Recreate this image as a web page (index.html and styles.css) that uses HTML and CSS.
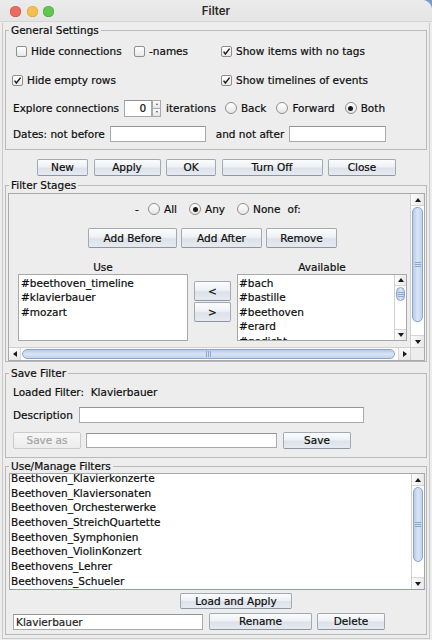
FILE: index.html
```html
<!DOCTYPE html>
<html>
<head>
<meta charset="utf-8">
<title>Filter</title>
<link rel="stylesheet" href="styles.css">
</head>
<body>
<div class="window">
  <div class="titlebar">
    <div class="lights"><span class="light red"></span><span class="light yellow"></span><span class="light green"></span></div>
    <div class="title">Filter</div>
    <div></div>
  </div>
  <div class="frame">
    <fieldset class="group gs">
      <legend>General Settings</legend>
      <div class="gs-body">
        <div class="row r1">
          <label class="cb w1"><span class="box"></span>Hide connections</label>
          <label class="cb w2"><span class="box"></span>-names</label>
          <label class="cb"><span class="box"><svg viewBox="0 0 11 11" width="11" height="11"><path d="M2.6 5.6 L4.4 8 L8.6 2.6" fill="none" stroke="#1c1c1c" stroke-width="1.4"/></svg></span>Show items with no tags</label>
        </div>
        <div class="row r2">
          <label class="cb w3"><span class="box"><svg viewBox="0 0 11 11" width="11" height="11"><path d="M2.6 5.6 L4.4 8 L8.6 2.6" fill="none" stroke="#1c1c1c" stroke-width="1.4"/></svg></span>Hide empty rows</label>
          <label class="cb"><span class="box"><svg viewBox="0 0 11 11" width="11" height="11"><path d="M2.6 5.6 L4.4 8 L8.6 2.6" fill="none" stroke="#1c1c1c" stroke-width="1.4"/></svg></span>Show timelines of events</label>
        </div>
        <div class="row r3">
          <span>Explore connections</span>
          <span class="spinner"><span class="spin-field">0</span><span class="spin-arrows"><span class="sa sa-up"></span><span class="sa sa-down"></span></span></span>
          <span class="iter">iterations</span>
          <label class="rb rb-first"><span class="radio"></span>Back</label>
          <label class="rb"><span class="radio"></span>Forward</label>
          <label class="rb"><span class="radio on"></span>Both</label>
        </div>
        <div class="row r4">
          <span>Dates: not before</span>
          <span class="field f-before"></span>
          <span class="after-lbl">and not after</span>
          <span class="field f-after"></span>
        </div>
      </div>
    </fieldset>

    <div class="main-btns">
      <button class="btn b-new">New</button>
      <button class="btn b-apply">Apply</button>
      <button class="btn b-ok">OK</button>
      <button class="btn b-off">Turn Off</button>
      <button class="btn b-close">Close</button>
    </div>

    <fieldset class="group fs">
      <legend>Filter Stages</legend>
      <div class="spane">
        <div class="vp">
          <div class="mode-row">
            <span class="dash">-</span>
            <label class="rb rb-m1"><span class="radio"></span>All</label>
            <label class="rb rb-m"><span class="radio on"></span>Any</label>
            <label class="rb rb-m"><span class="radio"></span>None</label>
            <span class="of">of:</span>
          </div>
          <div class="stage-btns">
            <button class="btn b-before">Add Before</button>
            <button class="btn b-after">Add After</button>
            <button class="btn b-remove">Remove</button>
          </div>
          <div class="lists">
            <div class="col col-use">
              <div class="cap">Use</div>
              <div class="list use-list">
                <div class="item">#beethoven_timeline</div>
                <div class="item">#klavierbauer</div>
                <div class="item">#mozart</div>
              </div>
            </div>
            <div class="move-btns">
              <button class="btn b-move">&lt;</button>
              <button class="btn b-move">&gt;</button>
            </div>
            <div class="col col-avail">
              <div class="cap">Available</div>
              <div class="list avail-list">
                <div class="avail-items">
                  <div class="item">#bach</div>
                  <div class="item">#bastille</div>
                  <div class="item">#beethoven</div>
                  <div class="item">#erard</div>
                  <div class="item">#gedicht</div>
                </div>
                <div class="vscroll vs-avail">
                  <div class="sarrow up"></div>
                  <div class="strack"><div class="thumb"></div></div>
                  <div class="sarrow down"></div>
                </div>
              </div>
            </div>
          </div>
        </div>
        <div class="vscroll vs-stage">
          <div class="sarrow up"></div>
          <div class="strack"><div class="thumb"></div></div>
          <div class="sarrow down"></div>
        </div>
        <div class="hscroll">
          <div class="sarrow left"></div>
          <div class="strack"><div class="thumb"></div></div>
          <div class="sarrow right"></div>
        </div>
        <div class="corner"></div>
      </div>
    </fieldset>

    <fieldset class="group sv">
      <legend>Save Filter</legend>
      <div class="sv-body">
        <div class="sv-row1">Loaded Filter:  Klavierbauer</div>
        <div class="sv-row2">
          <span>Description</span>
          <span class="field f-desc"></span>
        </div>
        <div class="sv-row3">
          <button class="btn disabled b-saveas">Save as</button>
          <span class="field f-name"></span>
          <button class="btn b-save">Save</button>
        </div>
      </div>
    </fieldset>

    <fieldset class="group um">
      <legend>Use/Manage Filters</legend>
      <div class="um-body">
        <div class="mlist">
          <div class="mitems">
            <div class="mitems-inner">
              <div class="item">Beethoven_Klavierkonzerte</div>
              <div class="item">Beethoven_Klaviersonaten</div>
              <div class="item">Beethoven_Orchesterwerke</div>
              <div class="item">Beethoven_StreichQuartette</div>
              <div class="item">Beethoven_Symphonien</div>
              <div class="item">Beethoven_ViolinKonzert</div>
              <div class="item">Beethovens_Lehrer</div>
              <div class="item">Beethovens_Schueler</div>
            </div>
          </div>
          <div class="vscroll vs-manage">
            <div class="sarrow up"></div>
            <div class="strack"><div class="thumb"></div></div>
            <div class="sarrow down"></div>
          </div>
        </div>
        <div class="load-row">
          <button class="btn b-load">Load and Apply</button>
        </div>
        <div class="bottom-row">
          <span class="field f-current">Klavierbauer</span>
          <button class="btn b-rename">Rename</button>
          <button class="btn b-delete">Delete</button>
        </div>
      </div>
    </fieldset>
  </div>
</div>
</body>
</html>
```

FILE: styles.css
```css
* { box-sizing: border-box; }
html, body { margin: 0; padding: 0; }
body {
  width: 432px;
  height: 640px;
  overflow: hidden;
  background: #7c9cc8;
  font-family: "DejaVu Sans", "Liberation Sans", sans-serif;
  font-size: 10.5px;
  color: #0d0d0d;
  -webkit-text-stroke: 0.2px currentColor;
}
.window {
  width: 432px;
  height: 640px;
  background: #ededed;
  border-top-right-radius: 10px;
  overflow: hidden;
}

/* title bar */
.titlebar {
  height: 22px;
  border-bottom: 1px solid #d4d4d4;
  background: linear-gradient(#ebebeb, #e5e5e5);
  display: grid;
  grid-template-columns: 1fr auto 1fr;
  align-items: center;
}
.lights { display: flex; gap: 5.5px; padding-left: 10px; padding-top: 1px; }
.light { width: 11px; height: 11px; border-radius: 50%; }
.red { background: #ed6a5e; box-shadow: inset 0 0 0 0.5px #d05247; }
.yellow { background: #f5bf4f; box-shadow: inset 0 0 0 0.5px #d6a13a; }
.green { background: #61c554; box-shadow: inset 0 0 0 0.5px #4aa83f; }
.title {
  font-family: Inter, "DejaVu Sans", sans-serif;
  font-weight: 600;
  font-size: 11.5px;
  color: #2a2a2a;
  -webkit-text-stroke: 0;
  padding-top: 1px;
}

/* outer frame */
.frame {
  margin: 0 2px;
  height: 616px;
  border: 1px solid #cacaca;
  border-top: none;
  padding: 0 2px;
}

/* group boxes */
.group {
  margin: 0;
  padding: 0;
  min-width: 0;
  border: 1px solid #b9b9b9;
}
.group > legend {
  margin-left: 3px;
  padding: 0 2px;
  height: 14px;
  line-height: 14px;
  font-size: 10.5px;
}
.gs { margin-top: 1px; }
.fs { margin-top: 2px; }
.sv { margin-top: 4px; }
.um { margin-top: 1px; }

/* general settings */
.gs-body { padding: 4px 7px 5px 7px; }
.row { display: flex; align-items: center; height: 20px; white-space: nowrap; }
.r2 { margin-top: 9px; margin-left: -1px; }
.r3 { margin-top: 8px; }
.r4 { margin-top: 6px; }
.r1 { padding-left: 3px; }

.cb { display: flex; align-items: center; flex: none; }
.w1 { width: 118px; }
.w2 { width: 87px; }
.w3 { width: 209px; }
.box {
  width: 11px;
  height: 11px;
  margin-right: 4px;
  border: 1px solid #8e8e8e;
  border-radius: 2px;
  background: linear-gradient(#ffffff, #e9e9e9);
  display: flex;
  align-items: center;
  justify-content: center;
  flex: none;
  overflow: hidden;
}
.box svg { display: block; flex: none; }

.rb { display: flex; align-items: center; flex: none; }
.radio {
  width: 12px;
  height: 12px;
  margin-right: 4px;
  border: 1px solid #8e8e8e;
  border-radius: 50%;
  background: linear-gradient(#ffffff, #e6e6e6);
  display: flex;
  align-items: center;
  justify-content: center;
  flex: none;
}
.radio.on::after {
  content: "";
  width: 5px;
  height: 5px;
  border-radius: 50%;
  background: #1a1a1a;
}
.rb-first { margin-left: 9px; }
.r3 .rb + .rb { margin-left: 10px; }

.spinner { display: flex; margin-left: 5px; height: 17px; flex: none; }
.spin-field {
  width: 28px;
  height: 17px;
  background: #fff;
  border: 1px solid #a8a8a8;
  border-top-color: #919191;
  text-align: right;
  padding-right: 5px;
  line-height: 15px;
}
.spin-arrows { display: flex; flex-direction: column; width: 9px; }
.sa {
  flex: 1;
  border: 1px solid #a8a8a8;
  background: linear-gradient(#fdfdfd, #e4e4e4);
  display: flex;
  align-items: center;
  justify-content: center;
}
.sa + .sa { border-top: none; }
.sa-up::after { content: ""; border-left: 1.5px solid transparent; border-right: 1.5px solid transparent; border-bottom: 2px solid #555; }
.sa-down::after { content: ""; border-left: 1.5px solid transparent; border-right: 1.5px solid transparent; border-top: 2px solid #555; }
.iter { margin-left: 5px; }

.field {
  display: block;
  flex: none;
  height: 16px;
  background: #fff;
  border: 1px solid #aaaaaa;
  border-top-color: #949494;
}
.f-before { width: 96px; margin-left: 5px; }
.after-lbl { margin-left: 10px; }
.f-after { width: 97px; margin-left: 4.5px; }

/* buttons */
.btn {
  font-family: inherit;
  font-size: 10.5px;
  color: #0d0d0d;
  -webkit-text-stroke: 0.2px currentColor;
  height: 17px;
  padding: 0;
  margin: 0;
  border: 1px solid #a2a9b4;
  border-bottom-color: #8e96a3;
  border-radius: 2px;
  background: linear-gradient(#fbfcfd, #eef1f5 45%, #dde2ea 55%, #e6eaf0);
  text-align: center;
  line-height: 15px;
  flex: none;
}
.btn.disabled {
  color: #a3a3a3;
  border-color: #cbcbcb;
  background: linear-gradient(#f7f7f7, #ececec);
}
.main-btns {
  display: flex;
  justify-content: center;
  gap: 5.5px;
  margin-top: 9px;
  height: 17px;
  padding-left: 1px;
}
.b-new { width: 51px; }
.b-apply { width: 67px; }
.b-ok { width: 50px; }
.b-off { width: 101px; }
.b-close { width: 68px; }

/* filter stages scroll pane */
.spane {
  height: 168px;
  margin: 1px 1px 0 2px;
  border: 1px solid #a9a9a9;
  display: grid;
  grid-template-columns: 1fr 14px;
  grid-template-rows: 1fr 13px;
}
.vp { overflow: hidden; }
.mode-row {
  display: flex;
  align-items: center;
  height: 20px;
  margin-top: 5px;
  padding-left: 126px;
  white-space: nowrap;
}
.dash { width: 5px; }
.rb-m1 { margin-left: 8px; }
.rb-m { margin-left: 12px; }
.of { margin-left: 7px; }
.stage-btns {
  display: flex;
  gap: 4px;
  margin-top: 9px;
  padding-left: 79px;
}
.stage-btns .btn { height: 20px; line-height: 18px; }
.b-before { width: 89px; }
.b-after { width: 81px; }
.b-remove { width: 71px; }

.lists { display: flex; margin-top: 12px; padding-left: 9px; }
.col { width: 170px; flex: none; }
.cap { height: 14px; line-height: 14px; text-align: center; }
.list {
  height: 67px;
  background: #fff;
  border: 1px solid #a8a8a8;
  overflow: hidden;
}
.use-list { padding: 1px 2px; }
.item { line-height: 14.4px; height: 14.4px; white-space: nowrap; }
.move-btns {
  display: flex;
  flex-direction: column;
  gap: 1px;
  padding-top: 21px;
  margin-left: 6px;
  margin-right: 6px;
}
.b-move { width: 37px; height: 20px; line-height: 18px; }
.avail-list { display: grid; grid-template-columns: 1fr 12px; }
.avail-items { padding: 1px 1px; overflow: hidden; }

/* scrollbars */
.vscroll {
  display: flex;
  flex-direction: column;
  background: #f4f4f4;
  border-left: 1px solid #d0d0d0;
}
.hscroll {
  display: flex;
  background: #f4f4f4;
  border-top: 1px solid #d0d0d0;
}
.sarrow {
  flex: none;
  display: flex;
  align-items: center;
  justify-content: center;
  background: linear-gradient(90deg, #fcfcfc, #e8e8e8);
}
.vscroll .sarrow { height: 12px; }
.hscroll .sarrow { width: 12px; background: linear-gradient(#fcfcfc, #e8e8e8); }
.sarrow.up { border-bottom: 1px solid #d6d6d6; }
.sarrow.down { border-top: 1px solid #d6d6d6; }
.sarrow.left { border-right: 1px solid #d6d6d6; }
.sarrow.right { border-left: 1px solid #d6d6d6; }
.sarrow.up::after { content: ""; border-left: 3px solid transparent; border-right: 3px solid transparent; border-bottom: 4px solid #1a1a1a; }
.sarrow.down::after { content: ""; border-left: 3px solid transparent; border-right: 3px solid transparent; border-top: 4px solid #1a1a1a; }
.sarrow.left::after { content: ""; border-top: 3px solid transparent; border-bottom: 3px solid transparent; border-right: 4px solid #1a1a1a; }
.sarrow.right::after { content: ""; border-top: 3px solid transparent; border-bottom: 3px solid transparent; border-left: 4px solid #1a1a1a; }
.strack {
  flex: 1;
  display: flex;
  background: #ffffff;
  min-width: 0;
  min-height: 0;
}
.vscroll .strack { flex-direction: column; padding: 0 1px; }
.hscroll .strack { padding: 1px 0; }
.thumb {
  flex: none;
  border: 1px solid #8ba5cb;
  border-radius: 5px;
  display: flex;
  align-items: center;
  justify-content: center;
}
.vscroll .thumb { background: linear-gradient(90deg, #b6c9e6, #dae5f5 50%, #c2d3eb); }
.hscroll .thumb { background: linear-gradient(#b6c9e6, #dae5f5 50%, #c2d3eb); }
.vscroll .thumb::after {
  content: "";
  width: 6px;
  height: 5px;
  background: repeating-linear-gradient(#8ea7cc 0 1px, transparent 1px 2px);
}
.hscroll .thumb::after {
  content: "";
  width: 5px;
  height: 6px;
  background: repeating-linear-gradient(90deg, #8ea7cc 0 1px, transparent 1px 2px);
}
.vs-stage .thumb { height: 115px; margin-top: 1px; }
.hscroll .thumb { width: 373px; margin-left: 1px; }
.vs-avail .sarrow { height: 11px; }
.vs-avail .thumb { height: 14px; margin-top: 1px; }
.vs-manage .thumb { height: 75px; margin-top: 1px; }
.corner { background: #ededed; border-top: 1px solid #d0d0d0; border-left: 1px solid #d0d0d0; }

/* save filter */
.sv-body { padding: 4px 7px 8px 7px; }
.sv-row1 { height: 16px; line-height: 16px; white-space: pre; }
.sv-row2 { display: flex; align-items: center; height: 18px; margin-top: 6px; }
.f-desc { width: 285px; margin-left: 6px; }
.sv-row3 { display: flex; align-items: center; height: 17px; margin-top: 8px; }
.b-saveas { width: 68px; }
.f-name { width: 191px; height: 15px; margin-left: 5px; }
.b-save { width: 68px; margin-left: 6px; }

/* use / manage */
.um-body { padding: 0 1px 4px 3px; }
.mlist {
  height: 117px;
  border: 1px solid #a8a8a8;
  border-bottom-color: #8c9dba;
  background: #fff;
  display: grid;
  grid-template-columns: 1fr 13px;
}
.mitems { overflow: hidden; padding-left: 1px; }
.mitems-inner { margin-top: -3px; }
.mitems .item { line-height: 14.7px; height: 14.7px; }
.load-row { margin-top: 3px; padding-left: 171px; height: 16px; display: flex; }
.b-load { width: 112px; height: 16px; line-height: 14px; }
.bottom-row { display: flex; align-items: center; margin-top: 4px; padding-left: 4px; height: 17px; }
.f-current { width: 190px; padding-left: 2px; line-height: 14px; color: #222; }
.b-rename { width: 103px; margin-left: 6px; }
.b-delete { width: 68px; margin-left: 5px; }
```
